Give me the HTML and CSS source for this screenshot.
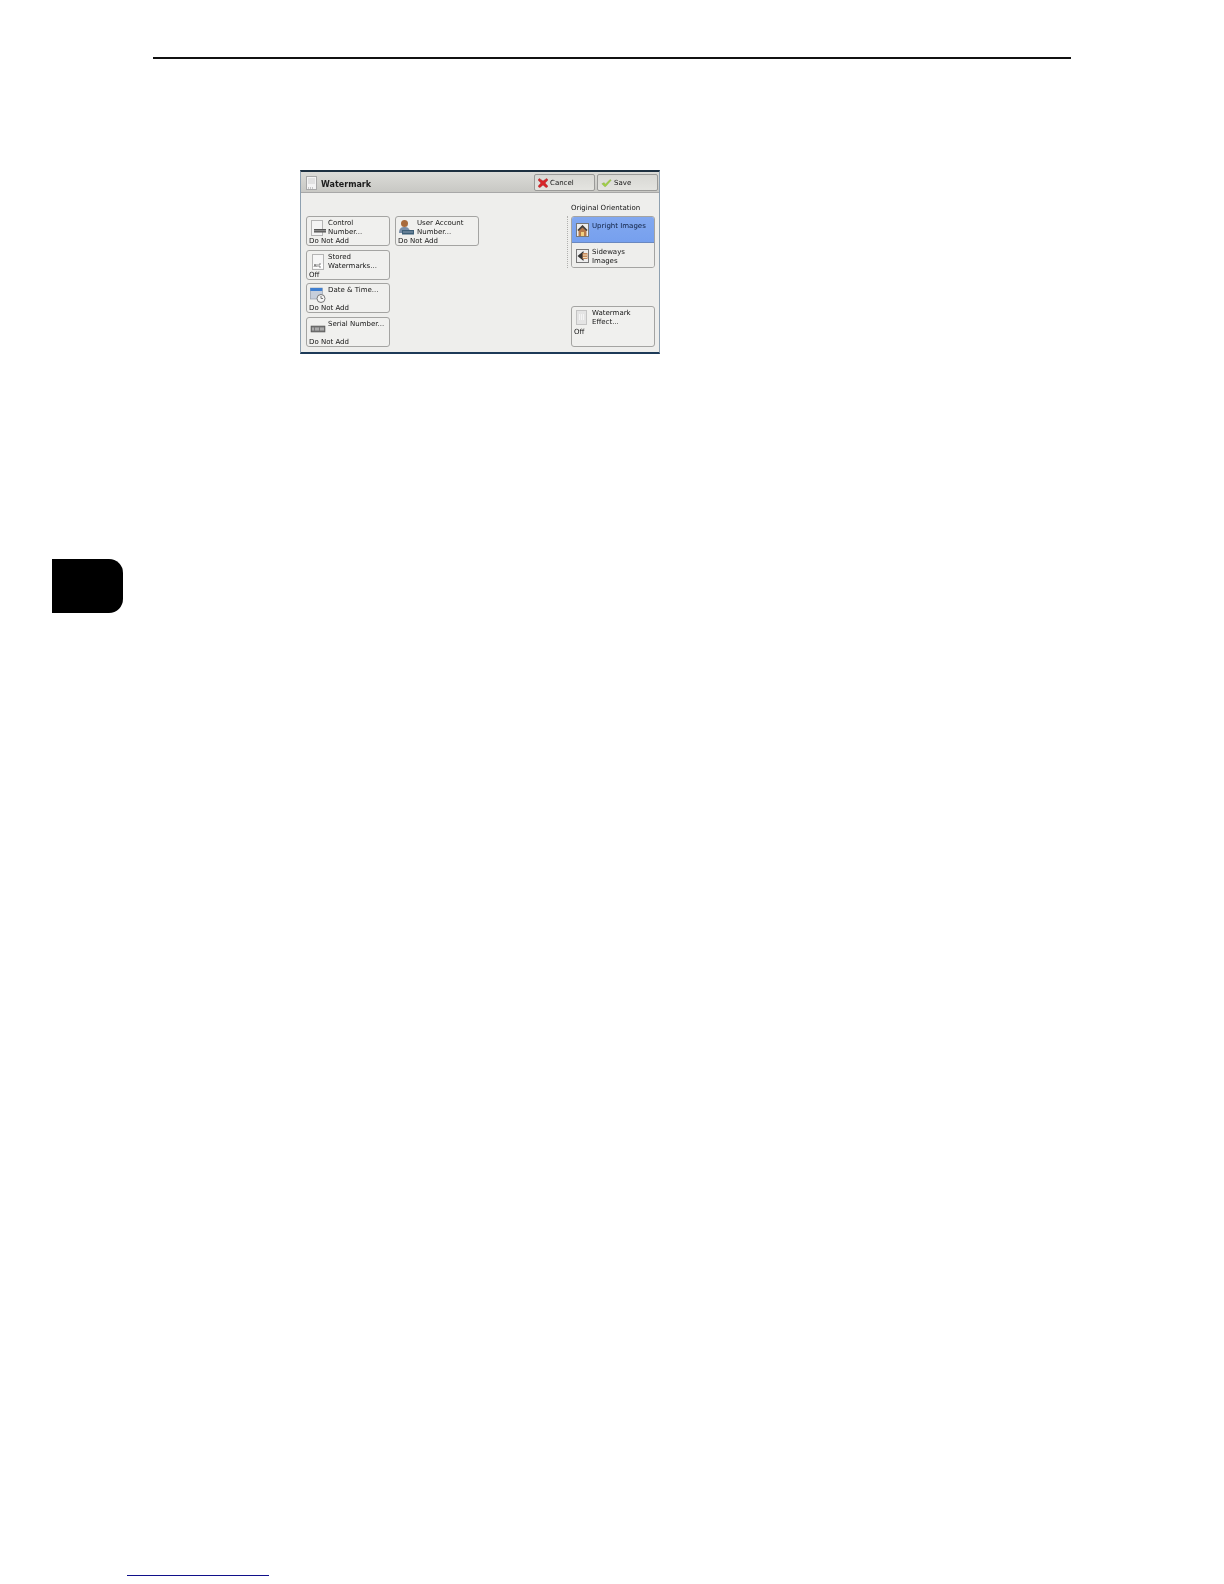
FILE: index.html
```
<!DOCTYPE html>
<html lang="en">
<head>
<meta charset="utf-8">
<title>Watermark</title>
<link rel="stylesheet" href="styles.css">
</head>
<body>
<div class="page">
  <hr class="rule">
  <div class="screen">
    <div class="titlebar">
      <svg class="doc" viewBox="0 0 11 14"><rect x=".5" y=".5" width="10" height="13" fill="#f4f4f4" stroke="#a8a8a8"/><path d="M2 3h7M2 5h7M2 7h7" stroke="#d0d0d0"/><path d="M2 12h6" stroke="#999" stroke-dasharray="1 1"/></svg>
      <span class="title">Watermark</span>
      <button class="top-btn cancel"><svg viewBox="0 0 12 12"><path d="M1.500 .5 6 3.500 10.500 .5 12 2.500 8.500 6 12 10 10 11.800 6 8.500 2 11.800 0 10 3.500 6 0 2.500z" fill="#d8262a" stroke="#8c1518" stroke-width=".4"/></svg>Cancel</button>
      <button class="top-btn save"><svg viewBox="0 0 14 12"><path d="M1 7l3-1.500 1.500 2L11.500 1.500 13 2.500 6 10.500 4.500 10.500z" fill="#9fcf45" stroke="#7c9c38" stroke-width=".4"/></svg>Save</button>
    </div>
    <div class="body">
      <div class="col">
        <button class="opt">
          <span class="row"><svg class="ico" viewBox="0 0 16 16"><rect x="1.500" y=".5" width="11" height="15" fill="#f4f4f4" stroke="#b4b4b4"/><rect x="4" y="9" width="12" height="3.500" fill="#555"/><path d="M4.500 10.700h11" stroke="#ddd" stroke-dasharray="1 1"/></svg><span class="lbl">Control<br>Number...</span></span>
          <span class="val">Do Not Add</span>
        </button>
        <button class="opt">
          <span class="row"><svg class="ico" viewBox="0 0 16 16"><rect x="2.500" y=".5" width="11" height="15" fill="#f6f6f6" stroke="#b4b4b4"/><rect x="3" y="10" width="10" height="4" fill="#fff"/><path d="M4 13l1-3 1 3M7 10v3M9 10v3h2M9 10h2" stroke="#555" fill="none" stroke-width=".7"/></svg><span class="lbl">Stored<br>Watermarks...</span></span>
          <span class="val">Off</span>
        </button>
        <button class="opt">
          <span class="row"><svg class="ico" viewBox="0 0 16 16"><rect x=".3" y="1" width="12" height="11" fill="#c6cedb" stroke="#8a94a4" stroke-width=".6"/><rect x=".3" y="1" width="12" height="3" fill="#3f7fd0"/><circle cx="11" cy="11.500" r="4" fill="#f4f4f4" stroke="#777"/><path d="M11 9v2.500h2" stroke="#777" fill="none"/></svg><span class="lbl">Date &amp; Time...</span></span>
          <span class="val">Do Not Add</span>
        </button>
        <button class="opt">
          <span class="row"><svg class="ico" viewBox="0 0 16 16"><rect x="1" y="5" width="14" height="6" fill="#777" stroke="#444" stroke-width=".5"/><path d="M3 6.500v3M6 6.500v3M8 6.500v3M11 6.500v3M13 6.500v3" stroke="#ddd"/></svg><span class="lbl">Serial Number...</span></span>
          <span class="val">Do Not Add</span>
        </button>
      </div>
      <div class="col">
        <button class="opt">
          <span class="row"><svg class="ico" viewBox="0 0 16 16"><circle cx="5.500" cy="3.500" r="3.500" fill="#a86a3c"/><path d="M0 13c0-5 2.500-6 5.500-6S11 8 11 13z" fill="#7a8ea8"/><rect x="3" y="10" width="12" height="4.500" fill="#3d5f78"/><path d="M4.500 12h9" stroke="#dde" stroke-dasharray="1 1"/></svg><span class="lbl">User Account<br>Number...</span></span>
          <span class="val">Do Not Add</span>
        </button>
      </div>
      <div class="side">
        <div class="side-head">Original Orientation</div>
        <div class="seg">
          <button class="seg-btn on"><svg class="ico" viewBox="0 0 13 14"><rect x=".5" y=".5" width="12" height="13" fill="#eee" stroke="#777"/><path d="M1.500 7l5-5 5 5-1 1v5h-8V8z" fill="#b87a4a"/><path d="M1.500 7l5-5 5 5-1.200 1-3.800-3.500L2.700 8z" fill="#444"/><rect x="5" y="9" width="3" height="4" fill="#f0d080"/></svg><span class="lbl">Upright Images</span></button>
          <button class="seg-btn"><svg class="ico" viewBox="0 0 13 14"><rect x=".5" y=".5" width="12" height="13" fill="#eee" stroke="#777"/><path d="M1.500 7l6-5v10z" fill="#333"/><rect x="6.500" y="4" width="5" height="6" fill="#c88a5a"/><path d="M7 6h4M7 8.500h4" stroke="#f0e0c0"/></svg><span class="lbl">Sideways<br>Images</span></button>
        </div>
        <button class="opt effect">
          <span class="row"><svg class="ico" viewBox="0 0 11 15"><rect x=".5" y=".5" width="10" height="14" fill="#e4e4e4" stroke="#c4c4c4"/><path d="M3.500 4v6M5.500 4v6M7.500 4v6" stroke="#f4f4f4"/></svg><span class="lbl">Watermark<br>Effect...</span></span>
          <span class="val">Off</span>
        </button>
      </div>
    </div>
  </div>
  <div class="tab"></div>
  <div class="spacer"></div>
  <div class="footlink"></div>
</div>
</body>
</html>
```
FILE: styles.css
```
* { box-sizing: border-box; }
html, body { margin: 0; padding: 0; background: #fff; }
.page { width: 1224px; height: 1584px; display: flex; flex-direction: column; font-family: "DejaVu Sans", "Liberation Sans", sans-serif; }
.rule { width: 918px; height: 2px; margin: 57px 0 0 153px; border: 0; background: #111; flex: none; }
.screen { width: 360px; height: 184px; margin: 111px 0 0 300px; flex: none; display: flex; flex-direction: column; background: #eeeeec; border-top: 2px solid #1d3040; border-bottom: 2px solid #1d3a58; border-left: 1px solid #8ea0b0; border-right: 1px solid #8ea0b0; color: #151515; filter: blur(.35px); }
.titlebar { height: 21px; flex: none; display: flex; align-items: center; padding: 1px 1px 0 5px; background: linear-gradient(#dcdcd8, #c8c8c4); border-bottom: 1px solid #a8a8a8; }
.doc { width: 11px; height: 14px; margin-right: 4px; flex: none; }
.title { font-size: 8px; font-weight: bold; flex: 1; color: #1c1c1c; padding-top: 3px; }
button { font: inherit; color: inherit; padding: 0; margin: 0; text-align: left; }
.top-btn { width: 61px; height: 17px; display: flex; align-items: center; gap: 2px; padding-left: 3px; font-size: 7px; border: 1px solid #9a9a98; border-radius: 2px; background: linear-gradient(#d8d8d4, #e4e4e0); }
.top-btn svg { width: 10px; height: 10px; flex: none; }
.top-btn.save { margin-left: 2px; }
.top-btn.save svg { width: 11px; }
.body { flex: 1; display: flex; padding: 23px 4px 0 5px; }
.col { display: flex; flex-direction: column; gap: 3.700px; width: 84px; margin-right: 5px; }
.opt { width: 84px; height: 30px; flex: none; display: flex; flex-direction: column; justify-content: space-between; border: 1px solid #a4a4a2; border-radius: 3px; background: #f0f0ee; padding: 2px 0 0 2px; font-size: 7px; line-height: 9px; }
.row { display: flex; align-items: flex-start; }
.ico { width: 16px; height: 16px; flex: none; margin: 1px 2px 0 1px; }
.lbl { display: block; font-size: 7px; line-height: 9px; white-space: nowrap; }
.val { display: block; font-size: 7px; line-height: 9px; margin-bottom: -1px; }
.side { margin-left: auto; width: 84px; display: flex; flex-direction: column; position: relative; }
.side-head { font-size: 7px; line-height: 9px; position: absolute; top: -12.500px; left: 0; white-space: nowrap; }
.side::before { content: ""; position: absolute; left: -4px; top: 0; height: 52px; border-left: 1px dotted #b0b0ae; }
.seg { display: flex; flex-direction: column; border: 1px solid #a4a4a2; border-radius: 3px; height: 52px; overflow: hidden; }
.seg-btn { height: 25px; flex: none; display: flex; align-items: flex-start; border: 0; background: #eeeeec; padding: 4.500px 0 0 4px; }
.seg-btn .ico { margin: 1.500px 3px 0 0; width: 13px; height: 14px; }
.seg-btn.on { height: 26px; background: linear-gradient(#82a8f0, #76a0ee); color: #102040; border-bottom: 1px solid #6a88c0; }
.effect { height: 41px; margin-top: 38px; justify-content: flex-start; }
.effect .ico { margin: 1px 5px 0 2px; width: 11px; height: 15px; }
.effect .val { margin-top: .5px; margin-bottom: 0; }
.tab { width: 71px; height: 54px; margin: 205px 0 0 52px; flex: none; background: #000; border-radius: 0 14px 14px 0; }
.spacer { flex: 1; }
.footlink { width: 142px; height: 1px; margin: 0 0 8px 127px; flex: none; background: #10108a; }
```
